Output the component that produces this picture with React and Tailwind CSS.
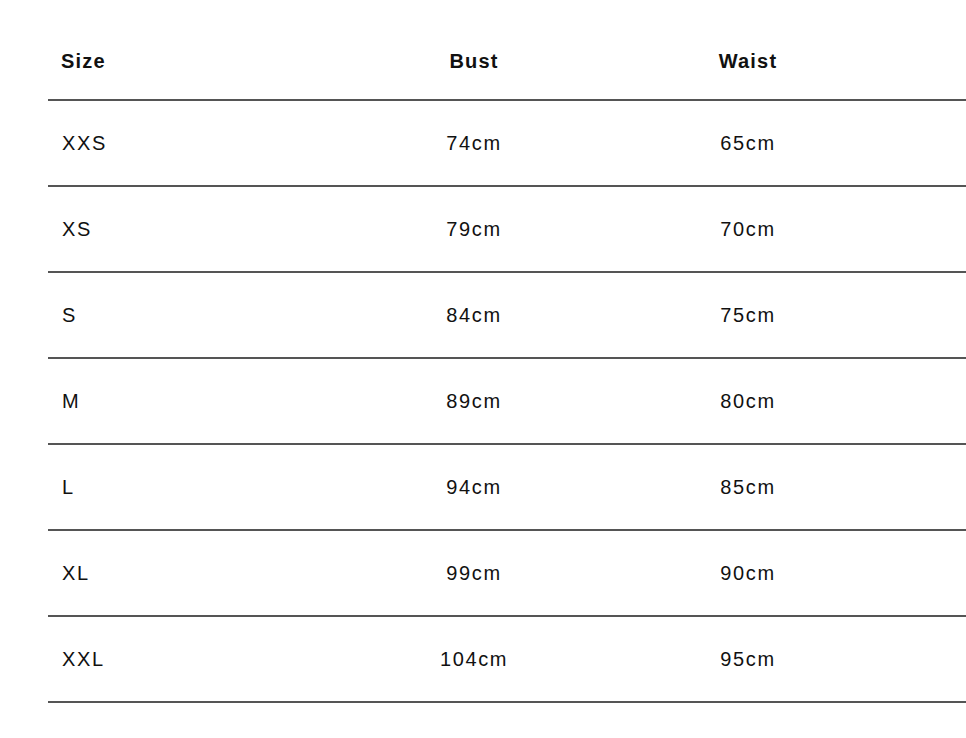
const rows = [
  { size: 'XXS', bust: '74cm', waist: '65cm' },
  { size: 'XS', bust: '79cm', waist: '70cm' },
  { size: 'S', bust: '84cm', waist: '75cm' },
  { size: 'M', bust: '89cm', waist: '80cm' },
  { size: 'L', bust: '94cm', waist: '85cm' },
  { size: 'XL', bust: '99cm', waist: '90cm' },
  { size: 'XXL', bust: '104cm', waist: '95cm' },
];

function App() {
  return (
    <div className="min-h-screen bg-white pl-12 pt-[23px] text-[#111] font-['Liberation_Sans',Arial,sans-serif]">
      <table className="w-full border-collapse">
        <thead>
          <tr className="border-b-2 border-[#555]">
            <th className="h-[77px] w-[289px] pl-[13px] text-left text-[20px] font-bold tracking-[0.06em]">Size</th>
            <th className="h-[77px] w-[274px] text-center text-[20px] font-bold tracking-[0.06em]">Bust</th>
            <th className="h-[77px] w-[274px] text-center text-[20px] font-bold tracking-[0.06em]">Waist</th>
            <th className="h-[77px]"></th>
          </tr>
        </thead>
        <tbody>
          {rows.map(r => (
            <tr key={r.size} className="border-b-2 border-[#555]">
              <td className="h-[86px] pl-[14px] text-left text-[20px] tracking-[0.08em]">{r.size}</td>
              <td className="h-[86px] text-center text-[20px] tracking-[0.08em]">{r.bust}</td>
              <td className="h-[86px] text-center text-[20px] tracking-[0.08em]">{r.waist}</td>
              <td className="h-[86px]"></td>
            </tr>
          ))}
        </tbody>
      </table>
    </div>
  );
}

export default App;
